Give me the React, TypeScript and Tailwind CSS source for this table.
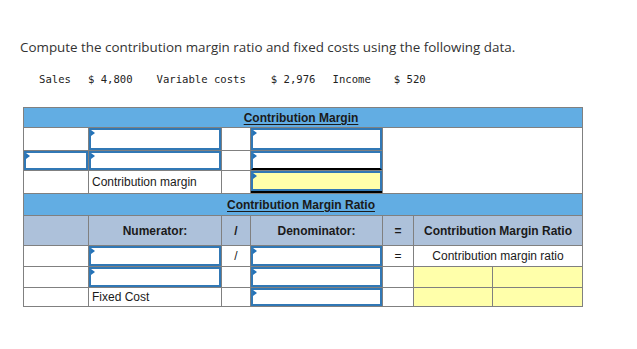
import React from 'react';

const line = 'bg-[#808080]';

function Marker() {
  return (
    <span className="absolute left-0 top-0 h-0 w-0 border-y-[3px] border-l-[4px] border-y-transparent border-l-[#2372b8]" />
  );
}

function Input({ yellow = false, under = false }: { yellow?: boolean; under?: boolean }) {
  return (
    <div className={`relative h-full w-full border-2 border-[#3178b5] ${under ? 'border-b-black' : ''} ${yellow ? 'bg-[#ffffaa]' : 'bg-white'}`}>
      <Marker />
    </div>
  );
}

function Cell({ children, className = '', bg = 'bg-white' }: { children?: React.ReactNode; className?: string; bg?: string }) {
  return <div className={`flex items-center ${bg} ${className}`}>{children}</div>;
}

function Header({ title }: { title: string }) {
  return (
    <div className="col-span-7 grid grid-cols-[197px_160px_1fr] items-center bg-[#62ade3]">
      <div />
      <div className="text-center text-[12px] font-bold text-[#1a1a1a] underline underline-offset-2">{title}</div>
      <div />
    </div>
  );
}

const gray = 'bg-[#adc1da]';
const yellow = 'bg-[#ffffaa]';

export default function App() {
  return (
    <div className={`min-h-screen bg-white`}>
      <div className="pl-[20px] pt-[38px] font-['Open_Sans',sans-serif] text-[13.4px] leading-[18px] text-[#333]">
        Compute the contribution margin ratio and fixed costs using the following data.
      </div>

      <div className="mt-[16px] flex pl-[39px] font-['DejaVu_Sans_Mono',monospace] text-[10.6px] leading-[14px] text-[#222]">
        <span>Sales</span>
        <span className="ml-[17px]">$ 4,800</span>
        <span className="ml-[24px]">Variable costs</span>
        <span className="ml-[25px]">$ 2,976</span>
        <span className="ml-[17px]">Income</span>
        <span className="ml-[23px]">$ 520</span>
      </div>

      <div className="ml-[23px] mt-[21px] w-[560px] font-['Liberation_Sans',Arial,sans-serif] text-[12px] text-[#1a1a1a]">
        <div className={`grid grid-cols-[64px_132px_28px_131px_30px_78px_89px] grid-rows-[19px_22px_19px_22px_21px_29px_20px_20px_18px] gap-px border border-[#808080] ${line}`}>
          <Header title="Contribution Margin" />

          {/* Contribution margin rows */}
          <Cell />
          <Input />
          <Cell />
          <Input />
          <div className="col-span-3 row-span-3 bg-white" />

          <Input />
          <Input />
          <Cell />
          <Input under />

          <Cell />
          <Cell className="pl-[3px]">Contribution margin</Cell>
          <Cell />
          <div className="flex flex-col bg-white">
            <div className="min-h-0 flex-1">
              <Input yellow />
            </div>
            <div className="h-[2px] bg-black" />
          </div>

          <Header title="Contribution Margin Ratio" />

          {/* Ratio header */}
          <Cell bg={gray} />
          <Cell bg={gray} className="justify-center font-bold">Numerator:</Cell>
          <Cell bg={gray} className="justify-center font-bold">/</Cell>
          <Cell bg={gray} className="justify-center font-bold">Denominator:</Cell>
          <Cell bg={gray} className="justify-center font-bold">=</Cell>
          <Cell bg={gray} className="col-span-2 justify-center font-bold">Contribution Margin Ratio</Cell>

          <Cell />
          <Input />
          <Cell className="justify-center">/</Cell>
          <Input />
          <Cell className="justify-center">=</Cell>
          <Cell className="col-span-2 justify-center">Contribution margin ratio</Cell>

          <Cell />
          <Input />
          <Cell />
          <Input />
          <Cell />
          <Cell bg={yellow} />
          <Cell bg={yellow} />

          <Cell />
          <Cell className="pl-[3px]">Fixed Cost</Cell>
          <Cell />
          <Input />
          <Cell />
          <Cell bg={yellow} />
          <Cell bg={yellow} />
        </div>
      </div>
    </div>
  );
}
